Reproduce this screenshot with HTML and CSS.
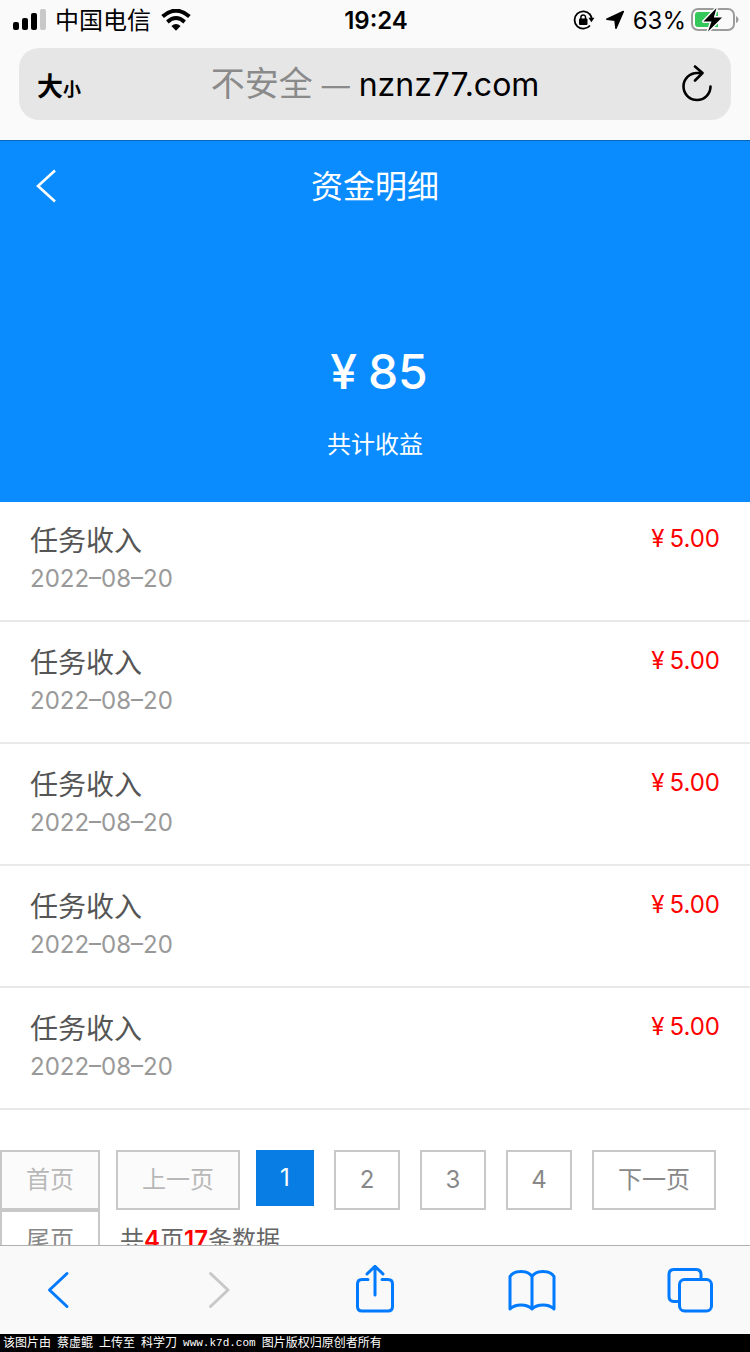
FILE: index.html
```html
<!DOCTYPE html>
<html lang="zh-CN">
<head>
<meta charset="utf-8">
<meta name="viewport" content="width=device-width, initial-scale=1">
<title>资金明细</title>
<link rel="stylesheet" href="styles.css">
</head>
<body>
<header class="browser">
  <div class="status">
    <div class="status-side">
      <svg class="signal" width="34" height="22" viewBox="0 0 34 22" aria-hidden="true">
        <rect x="0" y="13" width="6" height="8" rx="2"/><rect x="9" y="9" width="6" height="12" rx="2"/><rect x="18" y="4" width="6" height="17" rx="2"/><rect x="27" y="0" width="6" height="21" rx="2" fill="#c8c8c8"/>
      </svg>
      <span class="carrier">中国电信</span>
      <svg class="wifi" width="30" height="22" viewBox="0 0 30 22" aria-hidden="true">
        <path d="M1.6 7.6Q15-4.2 28.4 7.6" fill="none" stroke="#000" stroke-width="4"/>
        <path d="M6.4 13Q15 5.2 23.6 13" fill="none" stroke="#000" stroke-width="3.8"/>
        <path d="M10.4 17Q15 12.800 19.600 17L15 21.800z"/>
      </svg>
    </div>
    <time class="clock">19:24</time>
    <div class="status-side status-right">
      <svg width="22" height="20" viewBox="0 0 22 20" aria-hidden="true">
        <path d="M17 4.500A8.700 8.700 0 1 0 17 15.500" fill="none" stroke="#000" stroke-width="1.800"/>
        <path d="M15.400 7.800h6L18.400 12.300z"/>
        <path d="M16.500 3.800Q18.400 5.800 18.600 8.500" fill="none" stroke="#000" stroke-width="1.800"/>
        <rect x="6" y="8.500" width="8.500" height="6.500" rx="1"/>
        <path d="M7.900 9V7.200a2.300 2.300 0 0 1 4.600 0V9" fill="none" stroke="#000" stroke-width="1.500"/>
      </svg>
      <svg class="location" width="20" height="20" viewBox="0 0 20 20" aria-hidden="true"><path d="M18.300 1.500L11 18.200L10 10.200L1.800 9.200z" stroke="#000" stroke-width="1.600" stroke-linejoin="round"/></svg>
      <span class="percent">63%</span>
      <svg width="48" height="24" viewBox="0 0 48 24" aria-hidden="true">
        <rect x="1" y="1" width="42" height="21" rx="6" fill="#fafafa" stroke="#9c9c9c" stroke-width="2"/>
        <path d="M7 4H27V19H7Q4 19 4 16V7Q4 4 7 4z" fill="#34c759"/>
        <path d="M45 8Q47.500 9 47.500 11.500T45 15z" fill="#9c9c9c"/>
        <path d="M25.500 0L12.500 13.500H20.500L17 23.500L31 9.500H22.800z" fill="#000" stroke="#fafafa" stroke-width="3" paint-order="stroke" stroke-linejoin="round"/>
      </svg>
    </div>
  </div>
  <div class="address">
    <button class="textsize" type="button">大<span class="textsize-small">小</span></button>
    <p class="url"><span class="insecure">不安全</span> <span class="dash">—</span> nznz77.com</p>
    <button class="reload" type="button" aria-label="刷新">
      <svg width="32" height="38" viewBox="0 0 32 38" aria-hidden="true"><path d="M29.500 21.500A13.500 13.500 0 1 1 16 8H21M14 1.500L21.500 8L14 15.500" fill="none" stroke="#000" stroke-width="2.600" stroke-linecap="round" stroke-linejoin="round"/></svg>
    </button>
  </div>
</header>

<main class="page">
  <section class="hero">
    <div class="titlebar">
      <a class="back" href="#" aria-label="返回"><svg width="22" height="34" viewBox="0 0 22 34" aria-hidden="true"><path d="M20 1.500L3 17L20 32.500" fill="none" stroke="#fff" stroke-width="2.600"/></svg></a>
      <h1 class="title">资金明细</h1>
    </div>
    <p class="total"><span>¥</span><span>85</span></p>
    <p class="total-label">共计收益</p>
  </section>
  <ul class="records">
    <li class="record"><div><h2 class="record-name">任务收入</h2><time class="record-date">2022–08–20</time></div><p class="record-sum"><span>¥</span><span>5.00</span></p></li>
    <li class="record"><div><h2 class="record-name">任务收入</h2><time class="record-date">2022–08–20</time></div><p class="record-sum"><span>¥</span><span>5.00</span></p></li>
    <li class="record"><div><h2 class="record-name">任务收入</h2><time class="record-date">2022–08–20</time></div><p class="record-sum"><span>¥</span><span>5.00</span></p></li>
    <li class="record"><div><h2 class="record-name">任务收入</h2><time class="record-date">2022–08–20</time></div><p class="record-sum"><span>¥</span><span>5.00</span></p></li>
    <li class="record"><div><h2 class="record-name">任务收入</h2><time class="record-date">2022–08–20</time></div><p class="record-sum"><span>¥</span><span>5.00</span></p></li>
  </ul>
  <nav class="pager" aria-label="分页">
    <a class="pager-item pager-word is-disabled">首页</a>
    <a class="pager-item pager-word is-disabled">上一页</a>
    <span class="pager-item pager-current" aria-current="page">1</span>
    <a class="pager-item" href="#">2</a>
    <a class="pager-item" href="#">3</a>
    <a class="pager-item" href="#">4</a>
    <a class="pager-item pager-word" href="#">下一页</a>
    <a class="pager-item pager-word" href="#">尾页</a>
    <span class="pager-info">共<b>4</b>页<b>17</b>条数据</span>
  </nav>
</main>

<nav class="toolbar" aria-label="浏览器">
  <button class="tool" type="button" aria-label="后退"><svg width="48" height="50" viewBox="0 0 48 50" aria-hidden="true"><path d="M33 8.500L15.500 25L33 41.500"/></svg></button>
  <button class="tool" type="button" aria-label="前进" disabled><svg width="48" height="50" viewBox="0 0 48 50" aria-hidden="true"><path d="M18.500 8.500L36 25L18.500 41.500"/></svg></button>
  <button class="tool" type="button" aria-label="分享"><svg width="48" height="50" viewBox="0 0 48 50" aria-hidden="true"><path d="M18 14.500H12Q7.500 14.500 7.500 19V41.500Q7.500 46 12 46H38Q42.500 46 42.500 41.500V19Q42.500 14.500 38 14.500H32M25 30V1.500M17 9L25 1.200L33 9"/></svg></button>
  <button class="tool" type="button" aria-label="书签"><svg width="48" height="50" viewBox="0 0 48 50" aria-hidden="true"><path d="M24 11.500Q21 6.500 13 6.500Q5 6.500 2 11.500V44Q6 40 13 40Q20 40 24 44Q28 40 35 40Q42 40 46 44V11.500Q43 6.500 35 6.500Q27 6.500 24 11.500V44"/></svg></button>
  <button class="tool" type="button" aria-label="标签页"><svg width="48" height="50" viewBox="0 0 48 50" aria-hidden="true"><path d="M13 36.500H8Q3 36.500 3 31.500V9.500Q3 4.500 8 4.500H30Q35 4.500 35 9.500V14"/><rect x="13.500" y="14.500" width="32" height="31.500" rx="5"/></svg></button>
</nav>
<footer class="credit"><span>该图片由</span><span>蔡虚鲲</span><span>上传至</span><span>科学刀</span><span class="site">www.k7d.com</span><span>图片版权归原创者所有</span></footer>
</body>
</html>
```

FILE: styles.css
```css
* {
  box-sizing: border-box;
}

body {
  display: flex;
  flex-direction: column;
  height: 100vh;
  margin: 0;
  overflow: hidden;
  background: #fff;
  color: #000;
  font-family: Inter, "Noto Sans CJK SC", sans-serif;
}

h1, h2, p, ul {
  margin: 0;
  padding: 0;
  font-weight: 400;
}

button {
  padding: 0;
  border: 0;
  background: none;
  color: inherit;
  font-family: inherit;
}

svg {
  display: block;
  flex: none;
}

a {
  color: inherit;
  text-decoration: none;
}

.browser {
  flex: none;
  padding-bottom: 20px;
  border-bottom: 1px solid #0b66b5;
  background: #fafafa;
}

.status {
  display: grid;
  grid-template-columns: 1fr auto 1fr;
  align-items: center;
  height: 40px;
  padding: 0 11px 0 13px;
  font-size: 24px;
  line-height: 40px;
}

.status-side {
  display: flex;
  align-items: center;
}

.status-right {
  justify-content: flex-end;
}

.carrier,
.clock,
.percent {
  padding-top: 2px;
  line-height: 38px;
}

.carrier {
  margin: 0 10px 0 8px;
}

.clock {
  font-weight: 600;
}

.location {
  margin: 0 8px 0 10px;
}

.percent {
  margin-right: 5px;
}

.address {
  display: grid;
  grid-template-columns: 80px 1fr 80px;
  align-items: center;
  height: 72px;
  margin: 8px 19px 0;
  padding: 0 18px;
  border-radius: 20px;
  background: #e6e6e6;
}

.textsize {
  justify-self: start;
  font-size: 26px;
  font-weight: 700;
}

.textsize-small {
  font-size: 18px;
}

.url {
  padding-top: 2px;
  font-size: 32px;
  line-height: 48px;
  text-align: center;
  white-space: nowrap;
}

.insecure {
  color: #8a8a8a;
  font-size: 34px;
}

.dash {
  color: #8a8a8a;
  font-size: 28px;
}

.reload {
  justify-self: end;
}

.page {
  flex: 1;
  min-height: 0;
  overflow: hidden;
}

.hero {
  padding-bottom: 39px;
  background: #0a8cff;
  color: #fff;
  text-align: center;
}

.titlebar {
  display: grid;
  grid-template-columns: 60px 1fr 60px;
  align-items: center;
  height: 90px;
  padding: 0 35px;
}

.title {
  padding-top: 2px;
  font-size: 32px;
  line-height: 48px;
}

.total {
  display: flex;
  justify-content: center;
  gap: 11px;
  padding: 111px 0 0 8px;
  font-size: 48px;
  font-weight: 500;
  line-height: 60px;
}

.total-label {
  padding-top: 25px;
  font-size: 24px;
  line-height: 36px;
}

.records {
  list-style: none;
}

.record {
  display: flex;
  justify-content: space-between;
  padding: 21px 30px 23px;
  border-bottom: 2px solid #e9e9e9;
}

.record:first-child {
  padding-top: 19px;
}

.record-name {
  color: #555;
  font-size: 28px;
  line-height: 40px;
}

.record-date {
  display: block;
  color: #999;
  font-size: 24px;
  line-height: 36px;
}

.record-sum {
  display: flex;
  gap: 5px;
  color: #f00;
  font-size: 24px;
  line-height: 36px;
}

.pager {
  display: flex;
  flex-wrap: wrap;
  align-items: flex-start;
  padding-top: 40px;
  color: #888;
  font-size: 24px;
  line-height: 56px;
}

.pager-item {
  min-width: 66px;
  margin-right: 20px;
  border: 2px solid #c8c8c8;
  text-align: center;
}

.pager-word {
  padding: 0 24px;
}

.is-disabled {
  margin-right: 16px;
  background: #fbfbfb;
  color: #b8b8b8;
}

.pager-current {
  min-width: 58px;
  border: 0;
  background: #087de3;
  color: #fff;
}

.pager-info {
  line-height: 60px;
  color: #666;
}

.pager-info b {
  color: #f00;
  font-weight: 600;
}

.toolbar {
  display: flex;
  flex: none;
  align-items: center;
  justify-content: space-between;
  height: 89px;
  padding: 0 36px 0 34px;
  border-top: 1px solid #b0b0b0;
  background: #f9f9f9;
}

.tool {
  color: #007aff;
}

.tool:disabled {
  color: #c8c8c8;
}

.tool path,
.tool rect {
  fill: none;
  stroke: currentColor;
  stroke-width: 3;
  stroke-linecap: round;
  stroke-linejoin: round;
}

.credit {
  display: flex;
  flex: none;
  gap: 6px;
  height: 18px;
  padding-left: 3px;
  background: #000;
  color: #fff;
  font-size: 12px;
  line-height: 18px;
  white-space: nowrap;
}

.site {
  font-family: "Liberation Mono", monospace;
  font-size: 11px;
}
```
